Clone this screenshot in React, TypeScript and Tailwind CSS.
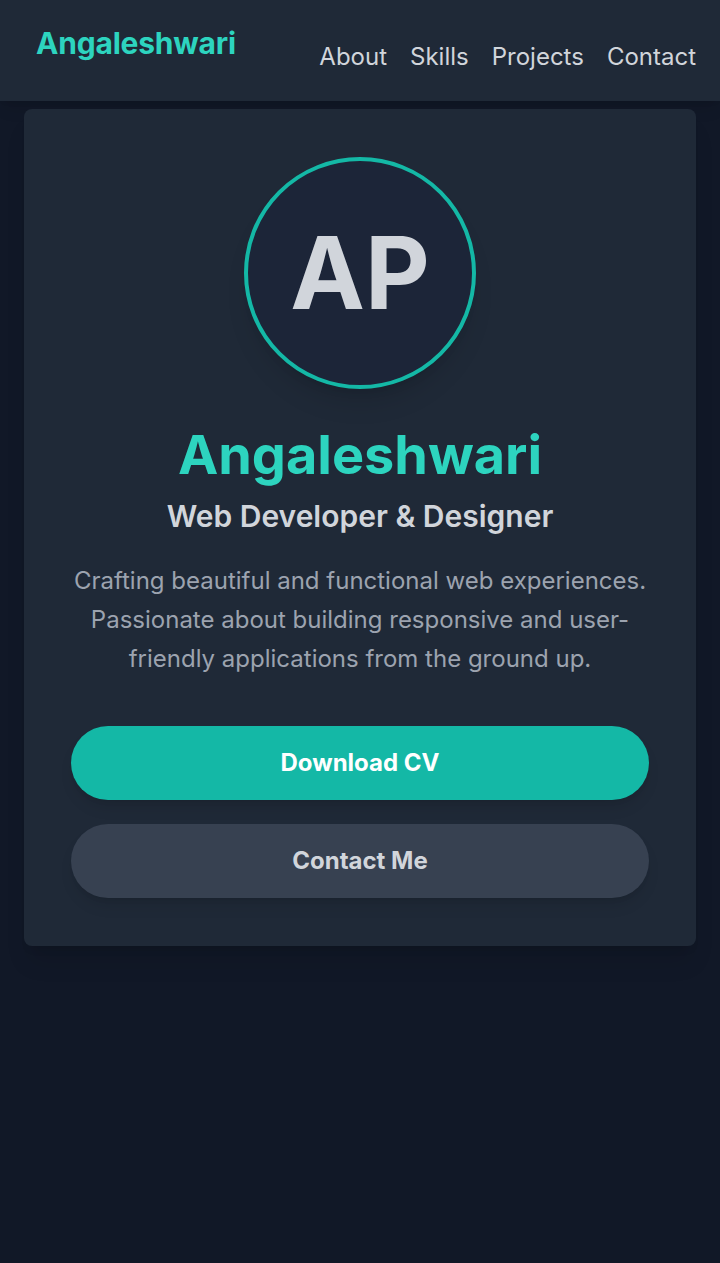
import React from "react";

export default function App() {
  const links = ["About", "Skills", "Projects", "Contact"];

  return (
    <div className="min-h-[1263px] bg-[#111827] font-['Inter',sans-serif]">
      {/* Header */}
      <header className="h-[101px] bg-[#1f2937] shadow-lg flex items-start justify-between pl-9 pr-6">
        <a href="#" className="mt-[25px] text-[30px] leading-9 font-bold text-[#2dd4bf] tracking-[-0.2px]">
          Angaleshwari
        </a>
        <nav className="mt-[41px] flex gap-[23px]">
          {links.map((l) => (
            <a key={l} href="#" className="text-[24px] leading-8 text-[#d1d5db]">
              {l}
            </a>
          ))}
        </nav>
      </header>

      {/* Hero card */}
      <main className="px-6 pt-2">
        <section className="bg-[#1f2937] rounded-lg shadow-xl px-[47px] py-12 flex flex-col items-center text-center">
          <div className="w-[232px] h-[232px] rounded-full border-4 border-[#14b8a6] bg-[#1c2538] shadow-xl flex items-center justify-center">
            <span className="text-[100px] leading-none font-bold text-[#d1d5db]">AP</span>
          </div>
          <h1 className="mt-[34px] text-[54px] leading-[64px] font-bold text-[#2dd4bf]">Angaleshwari</h1>
          <h2 className="mt-[11px] text-[30px] leading-9 font-semibold text-[#d1d5db]">Web Developer &amp; Designer</h2>
          <p className="mt-[27px] text-[24px] leading-[39px] text-[#9ca3af]">
            Crafting beautiful and functional web experiences. Passionate about building responsive and user-friendly applications from the ground up.
          </p>
          <div className="mt-12 w-full flex flex-col gap-6">
            <button className="h-[74px] w-full rounded-full bg-[#14b8a6] text-white text-[24px] font-bold shadow-lg">
              Download CV
            </button>
            <button className="h-[74px] w-full rounded-full bg-[#374151] text-[#d1d5db] text-[24px] font-bold shadow-lg">
              Contact Me
            </button>
          </div>
        </section>
      </main>
    </div>
  );
}
